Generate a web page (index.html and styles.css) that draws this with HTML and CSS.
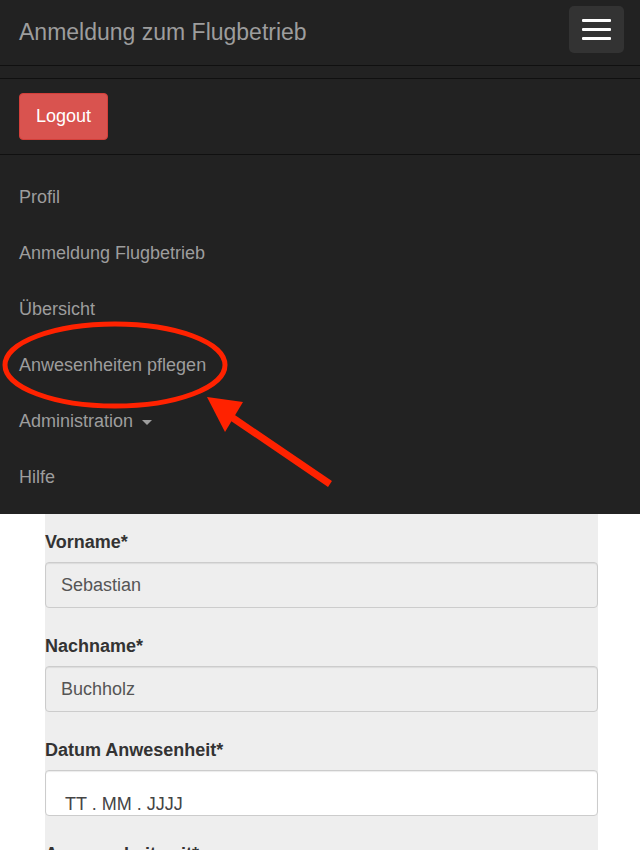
FILE: index.html
```html
<!DOCTYPE html>
<html lang="de">
<head>
    <meta charset="UTF-8">
    <meta name="viewport" content="width=device-width, initial-scale=1.0">
    <title>Anwesenheiten pflegen</title>
    <link rel="stylesheet" href="styles.css">
</head>
<body>
    <nav class="navbar">
        <div class="navbar-header">
            <a class="brand" href="#">Anmeldung zum Flugbetrieb</a>
            <button class="toggle" type="button">
                <span class="bar"></span>
                <span class="bar"></span>
                <span class="bar"></span>
            </button>
        </div>
        <div class="navbar-gap"></div>
        <div class="logout-row">
            <button class="btn-logout" type="button">Logout</button>
        </div>
        <ul class="nav-list">
            <li><a href="#">Profil</a></li>
            <li><a href="#">Anmeldung Flugbetrieb</a></li>
            <li><a href="#">Übersicht</a></li>
            <li><a href="#">Anwesenheiten pflegen</a></li>
            <li><a href="#">Administration <span class="caret"></span></a></li>
            <li><a href="#">Hilfe</a></li>
        </ul>
    </nav>

    <div class="form-panel">
        <label>Vorname*</label>
        <div class="field readonly">Sebastian</div>

        <label>Nachname*</label>
        <div class="field readonly">Buchholz</div>

        <label>Datum Anwesenheit*</label>
        <div class="field date">TT . MM . JJJJ</div>

        <label>Anwesenheit seit*</label>
    </div>

    <!-- annotation drawn over the screenshot -->
    <svg class="markup" width="640" height="850" viewBox="0 0 640 850">
        <ellipse cx="115" cy="365" rx="110" ry="41" fill="none" stroke="#ff2200" stroke-width="5"/>
        <line x1="230" y1="416" x2="330" y2="484" stroke="#ff2200" stroke-width="7"/>
        <polygon points="207,397 243,402 225,432" fill="#ff2200"/>
    </svg>
</body>
</html>
```

FILE: styles.css
```css
body {
    margin: 0;
    font-family: 'Liberation Sans', Arial, sans-serif;
    background: #fff;
    color: #333;
    position: relative;
    overflow: hidden;
    height: 850px;
}

a {
    text-decoration: none;
}

.navbar {
    background: #222;
}

.navbar-header {
    height: 65px;
    display: flex;
    align-items: center;
    justify-content: space-between;
    padding: 0 16px 0 19px;
    border-bottom: 1px solid #101010;
}

.brand {
    font-size: 23px;
    color: #9d9d9d;
}

.toggle {
    width: 55px;
    height: 47px;
    margin-top: -6px;
    background: #333;
    border: none;
    border-radius: 5px;
    display: flex;
    flex-direction: column;
    align-items: center;
    justify-content: center;
    gap: 6px;
    padding: 0;
}

.bar {
    display: block;
    width: 29px;
    height: 3px;
    background: #fff;
    border-radius: 1px;
}

.navbar-gap {
    height: 12px;
    border-bottom: 1px solid #101010;
}

.logout-row {
    padding: 14px 19px;
    border-bottom: 1px solid #101010;
}

.btn-logout {
    width: 89px;
    height: 47px;
    background: #d9534f;
    border: 1px solid #d43f3a;
    border-radius: 4px;
    color: #fff;
    font-family: inherit;
    font-size: 18px;
    padding: 0;
}

.nav-list {
    list-style: none;
    margin: 0;
    padding: 14px 0 9px;
}

.nav-list a {
    display: block;
    line-height: 56px;
    padding-left: 19px;
    font-size: 18px;
    color: #9d9d9d;
}

.caret {
    display: inline-block;
    width: 0;
    height: 0;
    margin-left: 4px;
    vertical-align: middle;
    border-top: 5px solid #9d9d9d;
    border-left: 5px solid transparent;
    border-right: 5px solid transparent;
}

.form-panel {
    margin: 0 42px 0 45px;
    background: #eee;
    padding-top: 18px;
    min-height: 400px;
}

.form-panel label {
    display: block;
    font-size: 18px;
    font-weight: bold;
    line-height: 20px;
    margin-bottom: 10px;
}

.field {
    box-sizing: border-box;
    height: 46px;
    border: 1px solid #ccc;
    border-radius: 4px;
    box-shadow: inset 0 1px 1px rgba(0, 0, 0, 0.08);
    font-size: 18px;
    color: #555;
    margin-bottom: 28px;
}

.readonly {
    background: #eee;
    padding: 12px 15px;
}

.date {
    background: #fff;
    padding: 23px 19px 0;
    color: #444;
}

.markup {
    position: absolute;
    left: 0;
    top: 0;
    pointer-events: none;
}
```
